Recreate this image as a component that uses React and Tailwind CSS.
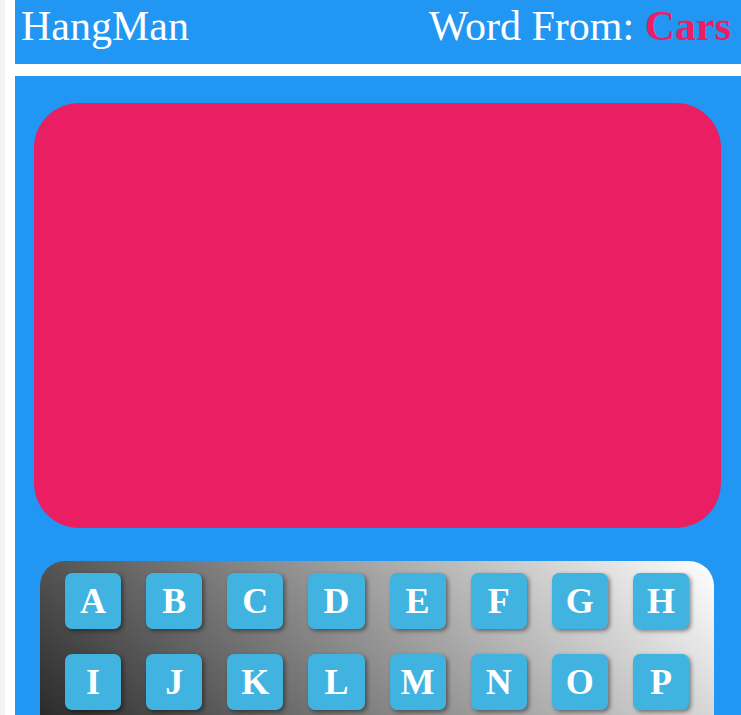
import React from 'react';

const letters = 'ABCDEFGHIJKLMNOPQRSTUVWXYZ'.split('');

function App() {
  return (
    <div className="min-h-screen bg-white border-l-[5px] border-[#f3f3f3] pl-[10px] font-['Liberation_Serif',serif]">
      {/* Top bar */}
      <header className="h-[64px] bg-[#2196f3] flex justify-between items-start pt-[2px] pl-[6px] pr-[10px] text-white text-[42px] leading-[48px]">
        <span>HangMan</span>
        <span>
          Word From: <b className="text-[#e91e63]">Cars</b>
        </span>
      </header>

      {/* Game area */}
      <main className="mt-[12px] bg-[#2196f3] pt-[27px] pl-[19px] pr-[20px] pb-[30px]">
        <div className="h-[425px] bg-[#e91e63] rounded-[45px]" />

        <div className="mt-[33px] ml-[6px] mr-[7px] rounded-[25px] bg-[linear-gradient(45deg,#000,#fff)] px-[25px] py-[12px] grid grid-cols-8 gap-x-[25px] gap-y-[25px]">
          {letters.map((l) => (
            <button
              key={l}
              className="h-[56px] rounded-[7px] bg-[#41b3e0] text-white font-bold text-[36px] leading-none shadow-[2px_2px_4px_rgba(0,0,0,0.45)] flex items-center justify-center"
            >
              {l}
            </button>
          ))}
        </div>
      </main>
    </div>
  );
}

export default App;
